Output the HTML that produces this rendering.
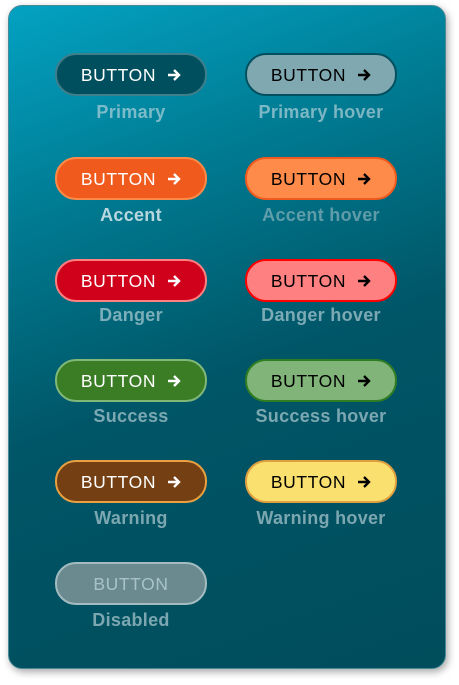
<!DOCTYPE html>
<html><head><style>
body{margin:0;width:459px;height:685px;background:#fff;position:relative;font-family:"Liberation Sans","DejaVu Sans",sans-serif;overflow:hidden}
.panel{position:absolute;left:8px;top:5px;width:436px;height:662px;border-radius:14px;border:1px solid #4a8a98;box-shadow:2px 3px 8px rgba(0,0,0,.35);background:linear-gradient(160deg,#03a2c2 0%,#007990 28%,#005566 55%,#004d5c 100%)}
.b{position:absolute;width:148px;height:39px;border:2px solid;border-radius:21px;box-sizing:content-box;color:#fff;font-size:17.5px;letter-spacing:.6px;display:flex;align-items:center;justify-content:center;padding-top:1px;height:38px}
.b svg{margin-left:11px}
.l{position:absolute;width:200px;text-align:center;font-size:18px;font-weight:bold;letter-spacing:.3px;color:rgba(200,220,226,.62)}
</style></head><body>
<div class="panel"></div>
<div class="b" style="left:55px;top:53px;background:#004f5e;border-color:#3f7e8b">BUTTON<svg width="14" height="14" viewBox="0 0 14 14"><path d="M1 7H12M7 2L12 7L7 12" stroke="#fff" stroke-width="2.4" fill="none"/></svg></div>
<div class="l" style="left:31px;top:102px">Primary</div>
<div class="b" style="left:245px;top:53px;background:#7fa8b1;border-color:#02505f;color:#000">BUTTON<svg width="14" height="14" viewBox="0 0 14 14"><path d="M1 7H12M7 2L12 7L7 12" stroke="#000" stroke-width="2.4" fill="none"/></svg></div>
<div class="l" style="left:221px;top:102px">Primary hover</div>

<div class="b" style="left:55px;top:157px;background:#f05a1d;border-color:#ff8a48">BUTTON<svg width="14" height="14" viewBox="0 0 14 14"><path d="M1 7H12M7 2L12 7L7 12" stroke="#fff" stroke-width="2.4" fill="none"/></svg></div>
<div class="l" style="left:31px;top:205px;color:rgba(215,232,236,.85)">Accent</div>
<div class="b" style="left:245px;top:157px;background:#ff8b4a;border-color:#f05a1d;color:#000">BUTTON<svg width="14" height="14" viewBox="0 0 14 14"><path d="M1 7H12M7 2L12 7L7 12" stroke="#000" stroke-width="2.4" fill="none"/></svg></div>
<div class="l" style="left:221px;top:205px;color:rgba(160,190,198,.6)">Accent hover</div>

<div class="b" style="left:55px;top:259px;background:#d0021b;border-color:#ff8080">BUTTON<svg width="14" height="14" viewBox="0 0 14 14"><path d="M1 7H12M7 2L12 7L7 12" stroke="#fff" stroke-width="2.4" fill="none"/></svg></div>
<div class="l" style="left:31px;top:305px">Danger</div>
<div class="b" style="left:245px;top:259px;background:#ff8080;border-color:#ff0000;color:#000">BUTTON<svg width="14" height="14" viewBox="0 0 14 14"><path d="M1 7H12M7 2L12 7L7 12" stroke="#000" stroke-width="2.4" fill="none"/></svg></div>
<div class="l" style="left:221px;top:305px">Danger hover</div>

<div class="b" style="left:55px;top:359px;background:#3a7d25;border-color:#80b878">BUTTON<svg width="14" height="14" viewBox="0 0 14 14"><path d="M1 7H12M7 2L12 7L7 12" stroke="#fff" stroke-width="2.4" fill="none"/></svg></div>
<div class="l" style="left:31px;top:406px">Success</div>
<div class="b" style="left:245px;top:359px;background:#80b478;border-color:#2f7d22;color:#000">BUTTON<svg width="14" height="14" viewBox="0 0 14 14"><path d="M1 7H12M7 2L12 7L7 12" stroke="#000" stroke-width="2.4" fill="none"/></svg></div>
<div class="l" style="left:221px;top:406px">Success hover</div>

<div class="b" style="left:55px;top:460px;background:#743f12;border-color:#e8a040">BUTTON<svg width="14" height="14" viewBox="0 0 14 14"><path d="M1 7H12M7 2L12 7L7 12" stroke="#fff" stroke-width="2.4" fill="none"/></svg></div>
<div class="l" style="left:31px;top:508px">Warning</div>
<div class="b" style="left:245px;top:460px;background:#fae06e;border-color:#e0a040;color:#000">BUTTON<svg width="14" height="14" viewBox="0 0 14 14"><path d="M1 7H12M7 2L12 7L7 12" stroke="#000" stroke-width="2.4" fill="none"/></svg></div>
<div class="l" style="left:221px;top:508px">Warning hover</div>

<div class="b" style="left:55px;top:562px;background:#6a8a90;border-color:#a4bcc0;color:#a8c2c6">BUTTON</div>
<div class="l" style="left:31px;top:610px">Disabled</div>
</body></html>
